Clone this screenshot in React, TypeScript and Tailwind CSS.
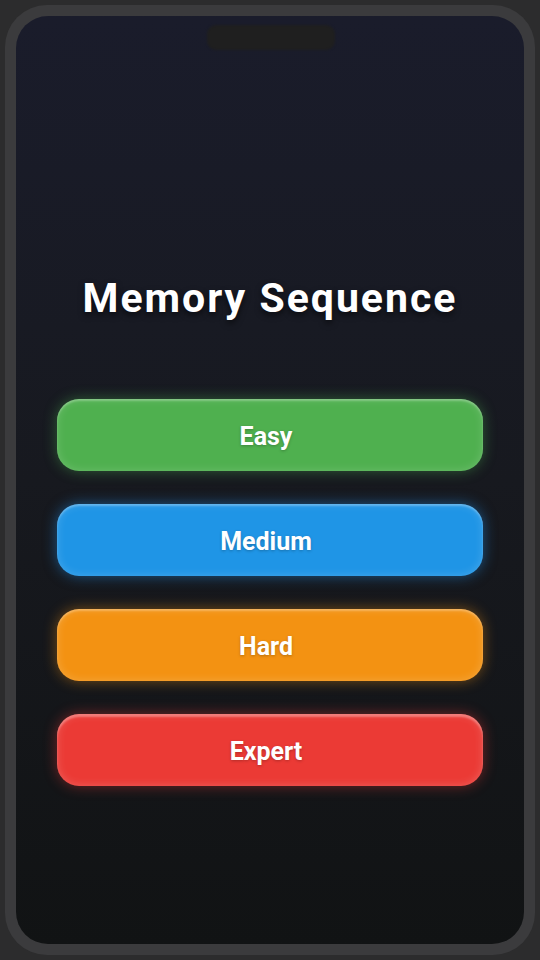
const levels = [
  {
    label: "Easy",
    cls: "bg-[#4fb04f] shadow-[0_0_14px_rgba(76,175,80,0.45),inset_0_2px_2px_rgba(255,255,255,0.25),inset_0_0_10px_rgba(255,255,255,0.18)]",
  },
  {
    label: "Medium",
    cls: "bg-[#1f95e6] shadow-[0_0_14px_rgba(33,150,243,0.5),inset_0_2px_2px_rgba(255,255,255,0.25),inset_0_0_10px_rgba(255,255,255,0.18)]",
  },
  {
    label: "Hard",
    cls: "bg-[#f39212] shadow-[0_0_14px_rgba(243,146,18,0.45),inset_0_2px_2px_rgba(255,255,255,0.25),inset_0_0_10px_rgba(255,255,255,0.2)]",
  },
  {
    label: "Expert",
    cls: "bg-[#eb3a35] shadow-[0_0_14px_rgba(235,58,53,0.45),inset_0_3px_2px_rgba(255,255,255,0.28),inset_0_0_10px_rgba(255,255,255,0.2)]",
  },
];

export default function App() {
  return (
    <div className="flex h-[960px] w-[540px] bg-[#2c2c2d] p-[5px] font-['Roboto',sans-serif]">
      <div className="flex flex-1 rounded-[42px] bg-[#3b3b3d] p-[11px]">
        <div className="relative flex flex-1 flex-col items-center overflow-hidden rounded-[32px] bg-gradient-to-b from-[#1a1c2b] via-[#17191f] to-[#111314]">
          <div className="absolute left-[191px] top-[9px] h-[25px] w-[128px] rounded-[9px] bg-[#1f1f1f] blur-[1px]" />

          <h1 className="mt-[252px] text-[41px] leading-[61px] font-bold tracking-[2px] text-white [text-shadow:0_3px_6px_rgba(0,0,0,0.6)]">
            Memory Sequence
          </h1>

          <div className="mt-[70px] flex w-[426px] flex-col gap-[33px]">
            {levels.map((l) => (
              <button
                key={l.label}
                type="button"
                className={
                  "flex h-[72px] items-center justify-center rounded-[22px] pt-1 pr-2 text-[25px] font-bold text-white [text-shadow:0_1px_3px_rgba(0,0,0,0.25)] " +
                  l.cls
                }
              >
                {l.label}
              </button>
            ))}
          </div>
        </div>
      </div>
    </div>
  );
}
